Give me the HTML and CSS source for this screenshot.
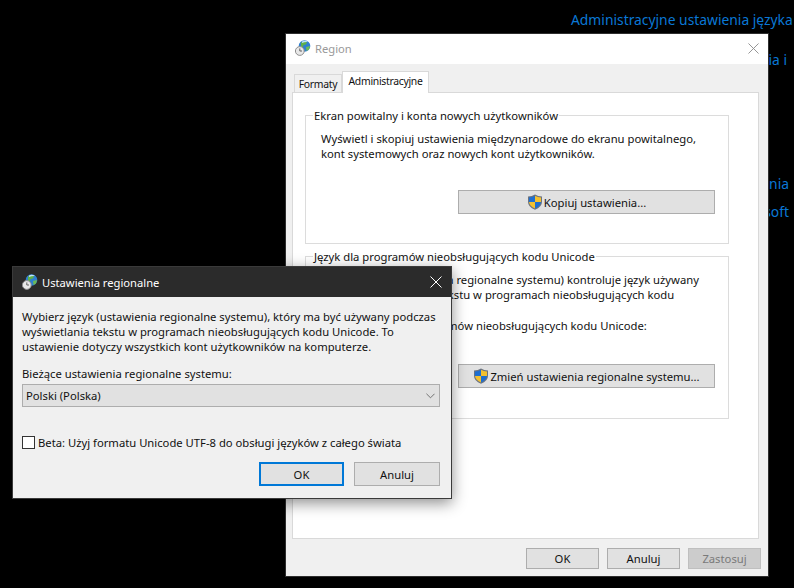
FILE: index.html
```html
<!DOCTYPE html>
<html lang="pl">
<head>
    <meta charset="UTF-8">
    <meta name="viewport" content="width=device-width, initial-scale=1.0">
    <title>Ustawienia regionalne</title>
    <link rel="stylesheet" href="styles.css">
</head>
<body>
    <svg class="defs" width="0" height="0" aria-hidden="true">
        <symbol id="globe" viewBox="0 0 16 16">
            <circle cx="9.5" cy="6" r="5.8" fill="#2f7fd0"/>
            <path d="M6 2.5 L9 1 L12 2 L11 4.5 L8.5 5 L8 7.5 L6 6.5 Z" fill="#5fb04a"/>
            <path d="M11 7 L15 6 L14 9.5 L11.5 11 Z" fill="#6cbb55"/>
            <path d="M7 1.5 Q10 0 13 2 Q10 1.6 7 3 Z" fill="#bfe3fa"/>
            <circle cx="4.8" cy="11" r="4.4" fill="#e8e8e8" stroke="#8d8d8d" stroke-width="1"/>
            <path d="M4.8 8.4 V11 H7" fill="none" stroke="#555" stroke-width="0.9"/>
        </symbol>
        <symbol id="shield" viewBox="0 0 16 16">
            <path d="M8 0.5 Q11 2.5 15 2.5 V8 Q15 13 8 15.8 Q1 13 1 8 V2.5 Q5 2.5 8 0.5 Z" fill="#6b7380"/>
            <path d="M8 1.8 V8 H2 V3.5 Q5.5 3.5 8 1.8 Z" fill="#1f6fd0"/>
            <path d="M8 1.8 Q10.5 3.5 14 3.5 V8 H8 Z" fill="#f4c12f"/>
            <path d="M2 8 H8 V14.6 Q2.6 12.4 2 8 Z" fill="#f4c12f"/>
            <path d="M8 8 H14 Q13.4 12.4 8 14.6 Z" fill="#1f6fd0"/>
        </symbol>
    </svg>

    <div class="bg-links">
        <a class="bg-title" href="#">Administracyjne ustawienia języka</a>
        <a class="bg-line1" href="#">Formatowania i</a>
        <a class="bg-line2" href="#">Ustawienia</a>
        <a class="bg-line3" href="#">Microsoft</a>
    </div>

    <div class="window region-window">
        <div class="titlebar">
            <svg class="app-icon"><use href="#globe"/></svg>
            <span class="title">Region</span>
            <svg class="close" viewBox="0 0 12 12"><path d="M0.5 0.5 L11.5 11.5 M11.5 0.5 L0.5 11.5"/></svg>
        </div>
        <div class="window-body">
            <div class="tabs">
                <div class="tab">Formaty</div>
                <div class="tab active">Administracyjne</div>
            </div>
            <div class="tab-panel">
                <fieldset class="group group-welcome">
                    <legend>Ekran powitalny i konta nowych użytkowników</legend>
                    <p>Wyświetl i skopiuj ustawienia międzynarodowe do ekranu powitalnego,<br>kont systemowych oraz nowych kont użytkowników.</p>
                    <div class="group-actions">
                        <button class="btn btn-wide"><svg class="shield"><use href="#shield"/></svg>Kopiuj ustawienia...</button>
                    </div>
                </fieldset>
                <fieldset class="group group-unicode">
                    <legend>Język dla programów nieobsługujących kodu Unicode</legend>
                    <p>Obecny język (ustawienia regionalne systemu) kontroluje język używany<br>podczas wyświetlania tekstu w programach nieobsługujących kodu<br>Unicode.</p>
                    <p class="current">Bieżący język dla programów nieobsługujących kodu Unicode:</p>
                    <div class="group-actions">
                        <button class="btn btn-wide"><svg class="shield"><use href="#shield"/></svg>Zmień ustawienia regionalne systemu...</button>
                    </div>
                </fieldset>
            </div>
            <div class="window-buttons">
                <button class="btn btn-small">OK</button>
                <button class="btn btn-small">Anuluj</button>
                <button class="btn btn-small" disabled>Zastosuj</button>
            </div>
        </div>
    </div>

    <div class="window locale-dialog">
        <div class="titlebar dark">
            <svg class="app-icon"><use href="#globe"/></svg>
            <span class="title">Ustawienia regionalne</span>
            <svg class="close" viewBox="0 0 12 12"><path d="M0.5 0.5 L11.5 11.5 M11.5 0.5 L0.5 11.5"/></svg>
        </div>
        <div class="dialog-body">
            <p>Wybierz język (ustawienia regionalne systemu), który ma być używany podczas<br>wyświetlania tekstu w programach nieobsługujących kodu Unicode. To<br>ustawienie dotyczy wszystkich kont użytkowników na komputerze.</p>
            <label class="field-label">Bieżące ustawienia regionalne systemu:</label>
            <div class="select">
                <span>Polski (Polska)</span>
                <svg class="chevron" viewBox="0 0 10 6"><path d="M0.5 0.5 L5 5 L9.5 0.5"/></svg>
            </div>
            <div class="check-row">
                <span class="checkbox"></span>
                <span>Beta: Użyj formatu Unicode UTF-8 do obsługi języków z całego świata</span>
            </div>
            <div class="dialog-buttons">
                <button class="btn btn-dialog btn-default">OK</button>
                <button class="btn btn-dialog">Anuluj</button>
            </div>
        </div>
    </div>
</body>
</html>
```

FILE: styles.css
```css
* {
    margin: 0;
    padding: 0;
    box-sizing: border-box;
}

html, body {
    height: 100%;
    overflow: hidden;
}

body {
    position: relative;
    background: #000;
    color: #111;
    font-family: 'Noto Sans', sans-serif;
    font-size: 11.25px;
    line-height: 15px;
}

.defs {
    position: absolute;
}

p {
    white-space: nowrap;
}

/* settings page behind the windows */
.bg-links a {
    position: absolute;
    color: #0a78d6;
    font-size: 13.85px;
    line-height: 20px;
    text-decoration: none;
    white-space: nowrap;
}

.bg-title { left: 571px; top: 10px; }
.bg-line1 { right: 7px; top: 50px; }
.bg-line2 { right: 5px; top: 174px; }
.bg-line3 { right: 5px; top: 202px; }

.window {
    position: absolute;
    display: flex;
    flex-direction: column;
    background: #f0f0f0;
    border: 1px solid #2e2e2e;
}

.region-window {
    left: 285px;
    top: 33px;
    width: 484px;
    height: 544px;
}

.locale-dialog {
    left: 12px;
    top: 266px;
    width: 440px;
    height: 233px;
    border-color: #3a3a3a;
    box-shadow: 0 4px 14px rgba(0, 0, 0, .45);
}

.titlebar {
    display: flex;
    align-items: center;
    flex: none;
    height: 30px;
    padding: 0 9px;
    background: #fff;
    color: #999;
    font-size: 11.2px;
}

.region-window .titlebar {
    padding-bottom: 2px;
}

.titlebar.dark {
    background: #2b2b2b;
    color: #fff;
}

.app-icon {
    width: 16px;
    height: 16px;
    margin-right: 4px;
}

.titlebar .title {
    flex: 1;
}

.close {
    width: 11px;
    height: 11px;
    margin-right: 0;
    fill: none;
    stroke: #8c8c8c;
    stroke-width: 1;
}

.dark .close {
    width: 12px;
    height: 12px;
    stroke: #fff;
}

/* Region window */
.window-body {
    flex: 1;
    display: flex;
    flex-direction: column;
    padding: 7px 9px 9px 6px;
}

.tabs {
    display: flex;
    align-items: flex-end;
    height: 21px;
    padding-left: 2px;
    position: relative;
    z-index: 1;
}

.tab {
    height: 18px;
    width: 48px;
    border: 1px solid #d9d9d9;
    border-bottom: none;
    background: #f0f0f0;
    font-size: 10.4px;
    line-height: 18px;
    text-align: center;
    letter-spacing: -0.3px;
}

.tab.active {
    height: 22px;
    width: 87px;
    margin-bottom: -1px;
    background: #fff;
    line-height: 18px;
}

.tab-panel {
    height: 447px;
    padding: 15px 29px 0 12px;
    background: #fff;
    border: 1px solid #d9d9d9;
}

.group {
    border: 1px solid #dcdcdc;
    padding: 0 13px 0 15px;
    min-width: 0;
}

.group legend {
    margin-left: -8px;
    padding: 0 1px;
}

.group-welcome {
    height: 136px;
    margin-bottom: 5px;
}

.group-welcome p {
    margin-top: 8px;
}

.group-unicode {
    height: 170px;
}

.group-unicode p {
    margin-top: 8px;
}

.group-unicode .current {
    margin-top: 1px;
}

.group-actions {
    display: flex;
    justify-content: flex-end;
}

.group-welcome .group-actions {
    margin-top: 29px;
}

.group-unicode .group-actions {
    margin-top: 31px;
}

.btn {
    display: inline-flex;
    align-items: center;
    justify-content: center;
    background: #e1e1e1;
    border: 1px solid #adadad;
    color: #111;
    font: inherit;
}

.btn-wide {
    width: 257px;
    height: 24px;
}

.shield {
    width: 16px;
    height: 16px;
    margin-right: 1px;
}

.window-buttons {
    display: flex;
    justify-content: flex-end;
    gap: 8px;
    margin-top: 9px;
    margin-right: -2px;
}

.btn-small {
    width: 73px;
    height: 21px;
}

.btn[disabled] {
    background: #ccc;
    border-color: #bfbfbf;
    color: #7a7a7a;
}

/* regional settings dialog */
.dialog-body {
    flex: 1;
    padding: 12px 11px 0 9px;
    background: #f0f0f0;
}

.field-label {
    display: block;
    margin-top: 12px;
}

.select {
    display: flex;
    align-items: center;
    justify-content: space-between;
    height: 23px;
    margin-top: 3px;
    padding: 0 3px;
    background: #e1e1e1;
    border: 1px solid #adadad;
}

.chevron {
    width: 9px;
    height: 6px;
    margin-right: 1px;
    fill: none;
    stroke: #666;
    stroke-width: 1;
}

.check-row {
    display: flex;
    align-items: center;
    gap: 3px;
    margin-top: 28px;
}

.checkbox {
    width: 13px;
    height: 13px;
    background: #fff;
    border: 1px solid #333;
}

.dialog-buttons {
    display: flex;
    justify-content: flex-end;
    gap: 10px;
    margin-top: 12px;
}

.btn-dialog {
    width: 86px;
    height: 24px;
}

.btn-default {
    width: 85px;
    border: 2px solid #0078d7;
}
```
